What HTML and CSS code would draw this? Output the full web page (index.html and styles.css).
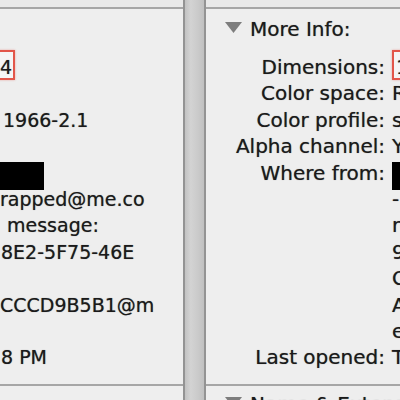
FILE: index.html
```html
<!DOCTYPE html>
<html>
<head>
<meta charset="utf-8">
<link rel="stylesheet" href="styles.css">
</head>
<body>
<div class="window">
  <div class="panel left">
    <div class="cap"></div>
    <div class="section">
      <div class="rows">
        <div class="row"><span class="hl hl-left">4</span></div>
        <div class="row"></div>
        <div class="row pad3">1966-2.1</div>
        <div class="row"></div>
        <div class="row"><span class="redact redact-left"></span></div>
        <div class="row">rapped@me.co</div>
        <div class="row indent">message:</div>
        <div class="row pad1">8E2-5F75-46E</div>
        <div class="row"></div>
        <div class="row">CCCD9B5B1@m</div>
        <div class="row"></div>
        <div class="row pad1">8 PM</div>
      </div>
    </div>
    <div class="foot"></div>
  </div>
  <div class="divider"></div>
  <div class="panel right">
    <div class="cap"></div>
    <div class="section">
      <div class="sec-head">
        <svg class="tri" width="17" height="11" viewBox="0 0 17 11"><polygon points="0,0 17,0 8.5,11" fill="#7d7d7d"/></svg>
        <span>More Info:</span>
      </div>
      <div class="info">
        <div class="label">Dimensions:</div><div class="value"><span class="hl">1024 × 768</span></div>
        <div class="label">Color space:</div><div class="value">RGB</div>
        <div class="label">Color profile:</div><div class="value">sRGB IEC61966-2.1</div>
        <div class="label">Alpha channel:</div><div class="value">Yes</div>
        <div class="label">Where from:</div><div class="value"><span class="redact"></span></div>
        <div class="label"></div><div class="value">-</div>
        <div class="label"></div><div class="value">re</div>
        <div class="label"></div><div class="value">9A</div>
        <div class="label"></div><div class="value">C3</div>
        <div class="label"></div><div class="value">A1</div>
        <div class="label"></div><div class="value">e7</div>
        <div class="label">Last opened:</div><div class="value">Today</div>
      </div>
    </div>
    <div class="foot">
      <div class="sec-head">
        <svg class="tri" width="17" height="11" viewBox="0 0 17 11"><polygon points="0,0 17,0 8.5,11" fill="#7d7d7d"/></svg>
        <span>Name &amp; Extension:</span>
      </div>
    </div>
  </div>
</div>
</body>
</html>
```

FILE: styles.css
```css
html, body {
  margin: 0;
  padding: 0;
  background: #eeeeee;
}

body {
  font-family: "DejaVu Sans", "Liberation Sans", sans-serif;
  color: #1a1a1a;
}

.window {
  display: flex;
  width: 400px;
  height: 400px;
  overflow: hidden;
  text-shadow: 0 0 0.8px rgba(0, 0, 0, 0.55);
}

.panel {
  background: #eeeeee;
  overflow: hidden;
  display: flex;
  flex-direction: column;
}

.panel.left {
  width: 183px;
  flex: none;
  border-right: 2px solid #939393;
  font-size: 19px;
}

.panel.right {
  flex: 1;
  min-width: 0;
  border-left: 2px solid #939393;
  font-size: 20px;
}

.divider {
  width: 19px;
  flex: none;
  background: linear-gradient(to right, #c2c2c2, #d3d3d3 30%, #cacaca 70%, #c0c0c0);
}

.cap {
  height: 7px;
  flex: none;
  background: #e9e9e9;
}

.section {
  height: 375px;
  flex: none;
  border-top: 2px solid #a6a6a6;
  border-bottom: 2px solid #a6a6a6;
}

.foot {
  flex: 1;
}

.rows {
  padding-top: 45px;
}

.row {
  height: 26.4px;
  line-height: 26.4px;
  white-space: nowrap;
  overflow: visible;
}

.row.indent {
  padding-left: 7px;
}

.row.pad3 {
  padding-left: 3px;
}

.row.pad1 {
  padding-left: 1px;
}

.hl {
  display: inline-block;
  vertical-align: top;
  margin-top: -4px;
  border: 2px solid #e2564a;
  box-shadow: 0 0 2px rgba(226, 86, 74, 0.45);
  background: #f5f5f5;
  padding: 4px 2px 0 2px;
  line-height: 22px;
  height: 22px;
}

.hl-left {
  margin-left: -6px;
  padding-left: 4px;
  padding-right: 1px;
}

.redact {
  display: inline-block;
  vertical-align: top;
  margin-top: 2.4px;
  width: 44px;
  height: 28px;
  background: #000;
}

.sec-head {
  display: flex;
  height: 26.4px;
  line-height: 26.4px;
  margin-top: 7px;
  padding-left: 19px;
  white-space: nowrap;
}

.foot .sec-head {
  margin-top: 5px;
}

.tri {
  flex: none;
  margin-top: 6px;
  margin-right: 8px;
}

.info {
  display: grid;
  grid-template-columns: 179px 1fr;
  grid-auto-rows: 26.4px;
  column-gap: 7px;
  line-height: 26.4px;
  margin-top: 11.6px;
  white-space: nowrap;
}

.label {
  text-align: right;
}

.value {
  overflow: visible;
}
```
